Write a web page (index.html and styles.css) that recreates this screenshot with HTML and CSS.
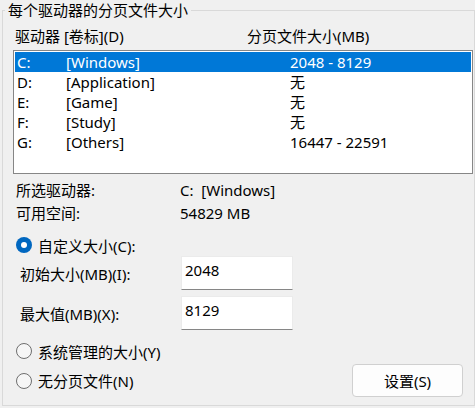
FILE: index.html
```html
<!DOCTYPE html>
<html lang="zh-CN">
<head>
<meta charset="utf-8">
<title>虚拟内存</title>
<link rel="stylesheet" href="styles.css">
</head>
<body>
<fieldset class="group">
  <legend class="group-title">每个驱动器的分页文件大小</legend>
  <div class="list-head">
    <span>驱动器 [卷标](D)</span>
    <span>分页文件大小(MB)</span>
  </div>
  <div class="listbox">
    <div class="row selected"><span>C:</span><span>[Windows]</span><span>2048 - 8129</span></div>
    <div class="row"><span>D:</span><span>[Application]</span><span>无</span></div>
    <div class="row"><span>E:</span><span>[Game]</span><span>无</span></div>
    <div class="row"><span>F:</span><span>[Study]</span><span>无</span></div>
    <div class="row"><span>G:</span><span>[Others]</span><span>16447 - 22591</span></div>
  </div>
  <div class="info">
    <span>所选驱动器:</span><span>C:&nbsp; [Windows]</span>
    <span>可用空间:</span><span>54829 MB</span>
  </div>
  <div class="radio-row first"><span class="radio checked"></span><span>自定义大小(C):</span></div>
  <div class="fields">
    <span>初始大小(MB)(I):</span><div class="field">2048</div>
    <span>最大值(MB)(X):</span><div class="field">8129</div>
  </div>
  <div class="radio-row second"><span class="radio"></span><span>系统管理的大小(Y)</span></div>
  <div class="last-row">
    <div class="radio-row"><span class="radio"></span><span>无分页文件(N)</span></div>
    <button class="btn" type="button">设置(S)</button>
  </div>
</fieldset>
</body>
</html>
```

FILE: styles.css
```css
html, body {
  margin: 0;
  padding: 0;
  background: #f0f0f0;
}
body {
  width: 475px;
  height: 408px;
  overflow: hidden;
  font-family: "Noto Sans", "Noto Sans CJK SC", sans-serif;
  font-size: 15px;
  color: #000;
}
.group {
  margin: 2px 0 2px 2px;
  padding: 0 0 8px 0;
  border: 1px solid #d9d9d9;
  min-width: 0;
}
.group-title {
  padding: 0 3px;
  margin-left: 2px;
  line-height: 16px;
}
.list-head {
  margin-top: 10px;
  line-height: 17px;
  display: grid;
  grid-template-columns: 232px 1fr;
  padding-left: 12px;
}
.listbox {
  margin: 5px 1px 0 10px;
  border: 1px solid #868686;
  padding: 1px;
  height: 120px;
  background: #fff;
}
.row {
  display: grid;
  grid-template-columns: 49px 224px 1fr;
  padding-left: 2px;
  height: 20px;
  line-height: 20px;
}
.row.selected {
  background: #0078d7;
  color: #fff;
}
.info {
  margin-top: 5px;
  display: grid;
  grid-template-columns: 164px 1fr;
  padding-left: 13px;
  line-height: 23px;
}
.radio-row {
  display: flex;
  align-items: center;
  gap: 6px;
  height: 22px;
  padding-left: 13px;
}
.radio-row.first {
  margin-top: 9px;
}
.radio-row.second {
  margin-top: 10px;
}
.radio {
  width: 14px;
  height: 14px;
  border: 1px solid #6e6e6e;
  border-radius: 50%;
  background: #f6f6f6;
  flex: none;
}
.radio.checked {
  width: 16px;
  height: 16px;
  border: none;
  background: #0067c0;
  display: flex;
  align-items: center;
  justify-content: center;
}
.radio.checked::after {
  content: "";
  width: 6px;
  height: 6px;
  border-radius: 50%;
  background: #fff;
}
.fields {
  display: grid;
  grid-template-columns: 161px 112px;
  row-gap: 6px;
  align-items: center;
  padding-left: 17px;
}
.field {
  box-sizing: border-box;
  height: 34px;
  background: #fff;
  border: 1px solid #ebebeb;
  border-bottom-color: #868686;
  padding: 4px 3px 0;
  line-height: 18px;
}
.last-row {
  display: flex;
  align-items: center;
  justify-content: space-between;
  margin-top: 2px;
  height: 33px;
  padding-right: 11px;
}
.btn {
  width: 111px;
  height: 33px;
  box-sizing: border-box;
  border: 1px solid #d0d0d0;
  border-radius: 4px;
  background: #fdfdfd;
  font: inherit;
  color: #000;
  padding: 0;
}
```
